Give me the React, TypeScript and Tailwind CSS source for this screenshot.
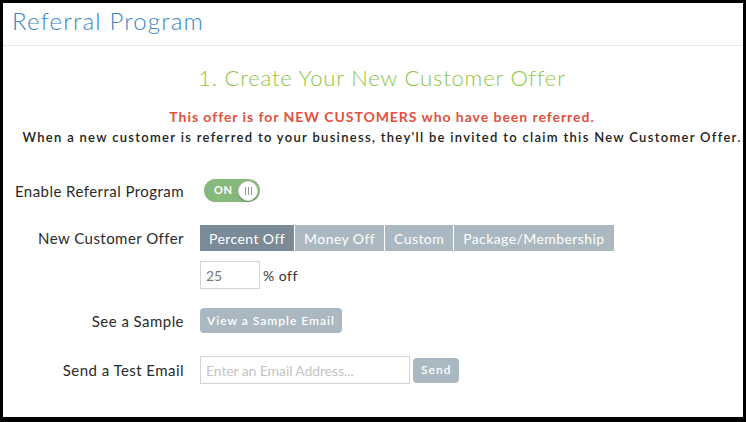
import { useState } from "react";

const segments = ["Percent Off", "Money Off", "Custom", "Package/Membership"];

const Row = ({ label, children, className = "" }: { label: string; children: React.ReactNode; className?: string }) => (
	<div className={`flex items-center ${className}`}>
		<div className="w-[181px] shrink-0 text-right text-[15px] leading-[20px] tracking-[0.45px] text-[#2a2a2a]">{label}</div>
		<div className="ml-[16px] flex items-center">{children}</div>
	</div>
);

const App = () => {
	const [active, setActive] = useState(0);
	const [on, setOn] = useState(true);

	return (
		<div
			className="h-[422px] w-[746px] overflow-hidden border-t-[3px] border-r-[3px] border-b-[5px] border-l-[3px] border-black bg-white"
			style={{ fontFamily: "Lato, 'Open Sans', sans-serif" }}
		>
			<div className="border-b border-dotted border-[#d4d4d4] px-[9px] pt-[3px] pb-[9px]">
				<h1 className="text-[24px] font-light leading-[30px] tracking-[1.2px] text-[#3a84c4]">Referral Program</h1>
			</div>

			<div className="pt-[18px] pl-[18px] text-center">
				<h2 className="text-[22px] font-light leading-[28px] tracking-[0.84px] text-[#8cc63f]">
					1. Create Your New Customer Offer
				</h2>
				<p className="mt-[15px] text-[14px] font-bold leading-[20px] tracking-[0.95px] text-[#e4503c]">
					This offer is for NEW CUSTOMERS who have been referred.
				</p>
				<p className="text-[13px] font-semibold leading-[20px] tracking-[1.3px] whitespace-nowrap text-[#222]">
					When a new customer is referred to your business, they'll be invited to claim this New Customer Offer.
				</p>
			</div>

			<div className="flex flex-col">
				<Row label="Enable Referral Program" className="mt-[32px]">
					<button
						onClick={() => setOn(!on)}
						className="ml-[4px] flex h-[23px] w-[56px] items-center justify-between rounded-full bg-[#86b97b] pr-[2px] pl-[10px]"
					>
						<span className="text-[11px] font-bold tracking-[0.5px] text-white">{on ? "ON" : "OFF"}</span>
						<span className="flex h-[20px] w-[20px] items-center justify-center gap-[2px] rounded-full border border-[#e2e2e2] bg-white shadow-[0_1px_1px_rgba(0,0,0,0.3)]">
							<span className="h-[8px] w-[1px] bg-[#8a9a8a]" />
							<span className="h-[8px] w-[1px] bg-[#8a9a8a]" />
							<span className="h-[8px] w-[1px] bg-[#8a9a8a]" />
						</span>
					</button>
				</Row>

				<Row label="New Customer Offer" className="mt-[23px]">
					<div className="flex gap-[1px]">
						{segments.map((s, i) => (
							<button
								key={s}
								onClick={() => setActive(i)}
								className={`h-[26px] px-[9px] text-[14px] tracking-[0.42px] text-white ${
									active === i ? "bg-[#7a8b97]" : "bg-[#aab8c1]"
								}`}
							>
								{s}
							</button>
						))}
					</div>
				</Row>

				<div className="mt-[10px] ml-[197px] flex items-center">
					<input
						defaultValue="25"
						className="h-[28px] w-[60px] border border-[#d4d4d4] px-[5px] text-[14px] text-[#777] outline-none"
					/>
					<span className="ml-[3px] text-[14px] tracking-[0.5px] text-[#333]">% off</span>
				</div>

				<Row label="See a Sample" className="mt-[19px]">
					<button className="h-[25px] rounded-[4px] bg-[#aab8c1] px-[7px] text-[12px] font-semibold tracking-[1px] text-white">
						View a Sample Email
					</button>
				</Row>

				<Row label="Send a Test Email" className="mt-[23px]">
					<input
						placeholder="Enter an Email Address..."
						className="h-[28px] w-[210px] border border-[#d4d4d4] px-[5px] text-[14px] tracking-[-0.1px] text-[#555] outline-none placeholder:text-[#c4c4c4]"
					/>
					<button className="ml-[3px] h-[25px] rounded-[4px] bg-[#aab8c1] px-[8px] text-[12px] font-semibold tracking-[1px] text-white">
						Send
					</button>
				</Row>
			</div>
		</div>
	);
};

export default App;
